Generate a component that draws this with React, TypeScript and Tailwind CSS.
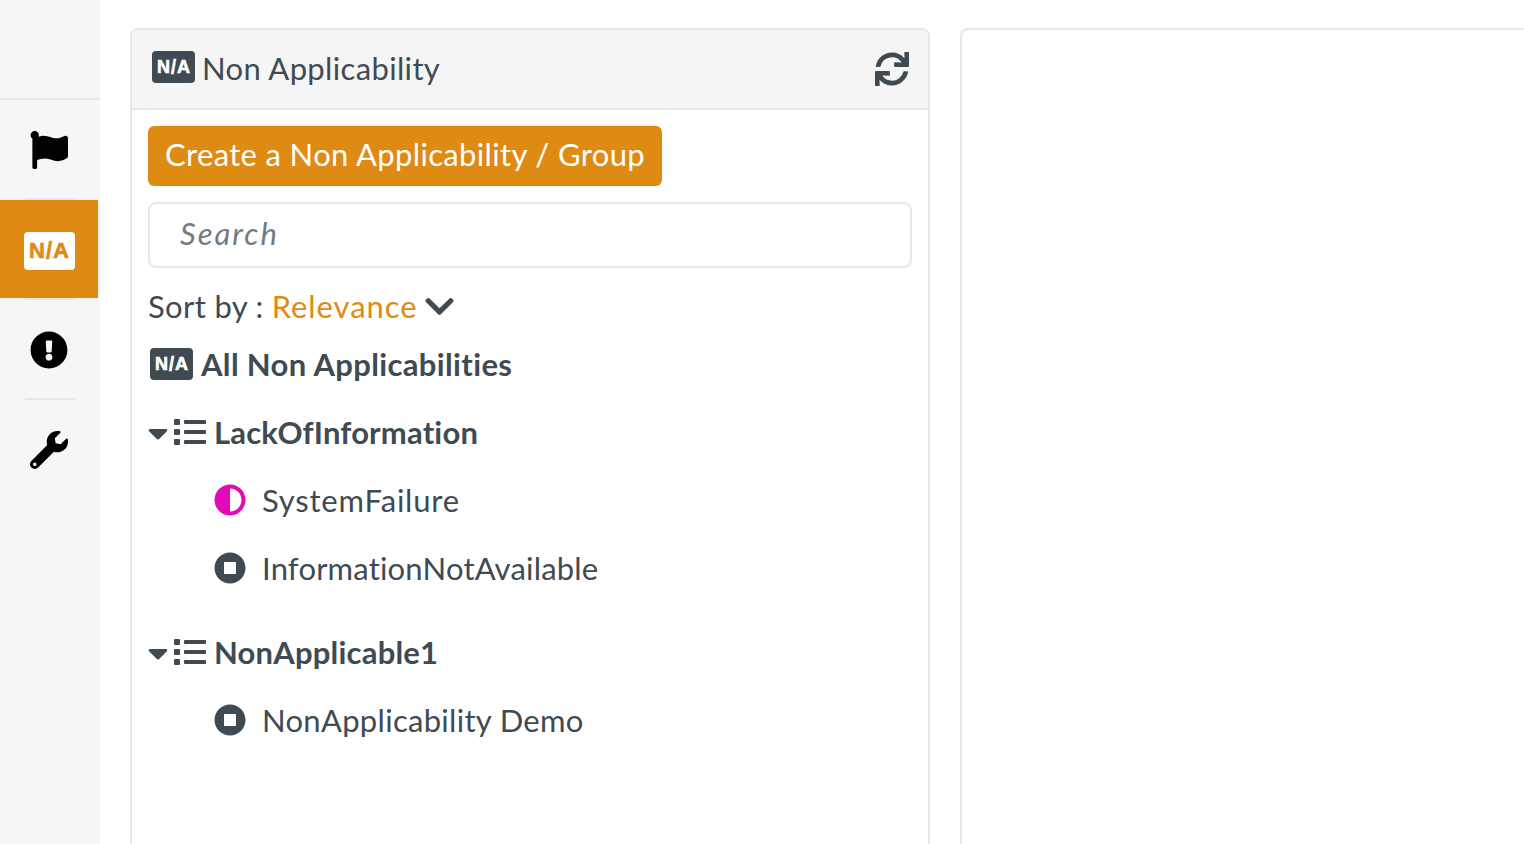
import React from "react";
import { FaFlag, FaExclamationCircle, FaWrench, FaSync, FaList, FaCaretDown, FaChevronDown, FaAdjust, FaStopCircle } from "react-icons/fa";

function Badge({ w, h, textSize, className }: { w: string; h: string; textSize: string; className: string }) {
  return (
    <span className={`inline-flex items-center justify-center rounded-[4px] font-['Liberation_Sans',sans-serif] font-bold tracking-[0px] [-webkit-text-stroke:0.6px_currentColor] ${w} ${h} ${textSize} ${className}`}>
      N<span className="mx-[1px] scale-y-110">/</span>A
    </span>
  );
}

function NavItem({ children, active }: { children: React.ReactNode; active?: boolean }) {
  return (
    <div className={`flex h-[98px] w-[98px] items-center justify-center ${active ? "bg-[#df8a13] text-white" : "text-black"}`}>
      {children}
    </div>
  );
}

function Divider() {
  return <div className="mx-[25px] h-[2px] w-[50px] bg-[#e7e7e7]" />;
}

function Group({ name, tracking }: { name: string; tracking: string }) {
  return (
    <div className="flex h-[40px] items-center">
      <FaCaretDown className="mt-[-2px] h-[32px] w-[20px] shrink-0" />
      <FaList className="ml-[6px] mt-[-5px] h-[32px] w-[32px] shrink-0" />
      <span className={`ml-[8px] pb-[3px] text-[31px] font-bold ${tracking}`}>{name}</span>
    </div>
  );
}

function Item({ name, adjust, tracking }: { name: string; adjust?: boolean; tracking: string }) {
  return (
    <div className="flex h-[40px] items-center pl-[66px]">
      {adjust ? (
        <FaAdjust className="mt-[-5px] h-[32px] w-[32px] shrink-0 text-[#e209b8]" />
      ) : (
        <FaStopCircle className="mt-[-5px] h-[32px] w-[32px] shrink-0" />
      )}
      <span className={`ml-[16px] pb-[3px] text-[31px] ${tracking}`}>{name}</span>
    </div>
  );
}

export default function App() {
  return (
    <div className="flex h-screen overflow-hidden bg-white font-['Lato','Open_Sans',sans-serif] tracking-[0.35px] text-[#3f4a52] [font-variant-ligatures:none]">
      <aside className="h-full w-[100px] shrink-0 bg-[#f6f6f6]">
        <div className="h-[98px]" />
        <div className="h-[2px] w-full bg-[#e7e7e7]" />
        <NavItem><FaFlag className="mt-[2px] h-[38px] w-[38px]" /></NavItem>
        <Divider />
        <NavItem active>
          <Badge w="w-[51px]" h="h-[38px]" textSize="text-[22px]" className="mt-[3px] bg-white text-[#df8a13]" />
        </NavItem>
        <Divider />
        <NavItem><FaExclamationCircle className="mt-[1px] h-[38px] w-[38px]" /></NavItem>
        <Divider />
        <NavItem><FaWrench className="mt-[1px] h-[38px] w-[38px]" /></NavItem>
      </aside>

      <main className="flex min-w-0 flex-1 gap-[30px] pl-[30px] pt-[28px]">
        <section className="h-[900px] w-[800px] shrink-0 rounded-t-[8px] border-2 border-[#e7e7e7]">
          <header className="flex h-[80px] items-center justify-between rounded-t-[6px] border-b-2 border-[#e7e7e7] bg-[#f5f5f5] pl-[20px] pr-[19px]">
            <div className="flex items-center">
              <Badge w="w-[43px]" h="h-[32px]" textSize="text-[18px]" className="mt-[-4px] bg-[#3f4a52] text-white" />
              <span className="ml-[7px] pb-[2px] text-[31px]">Non Applicability</span>
            </div>
            <FaSync className="h-[34px] w-[34px]" />
          </header>

          <div className="px-[16px] pt-[16px]">
            <button className="flex h-[60px] w-[514px] items-center justify-center rounded-[6px] bg-[#df8a13] pb-[3px] text-[31px] text-white">
              Create a Non Applicability / Group
            </button>
            <div className="mt-[16px] flex h-[66px] items-center rounded-[8px] border-2 border-[#e7e7e7] pb-[3px] pl-[30px] text-[31px] italic tracking-[2px] text-[#737a80]">
              Search
            </div>
            <div className="mt-[20px] flex h-[40px] items-center text-[31px]">
              <span className="pb-[3px]">Sort by :</span>
              <span className="ml-[8px] pb-[3px] tracking-[0.95px] text-[#df8a13]">Relevance</span>
              <FaChevronDown className="ml-[5px] mt-[-4px] h-[33px] w-[33px]" />
            </div>
            <div className="mt-[18px] flex h-[40px] items-center">
              <Badge w="w-[43px]" h="h-[32px]" textSize="text-[18px]" className="ml-[2px] mt-[-4px] bg-[#3f4a52] text-white" />
              <span className="ml-[8px] pb-[3px] text-[31px] font-bold">All Non Applicabilities</span>
            </div>
            <div className="mt-[28px]"><Group name="LackOfInformation" tracking="tracking-[0.17px]" /></div>
            <div className="mt-[28px]"><Item name="SystemFailure" adjust tracking="tracking-[0.8px]" /></div>
            <div className="mt-[28px]"><Item name="InformationNotAvailable" tracking="tracking-[0.18px]" /></div>
            <div className="mt-[44px]"><Group name="NonApplicable1" tracking="tracking-[0.2px]" /></div>
            <div className="mt-[28px]"><Item name="NonApplicability Demo" tracking="tracking-[0.3px]" /></div>
          </div>
        </section>
        <section className="h-[900px] min-w-[800px] flex-1 rounded-t-[8px] border-2 border-[#e7e7e7]" />
      </main>
    </div>
  );
}
